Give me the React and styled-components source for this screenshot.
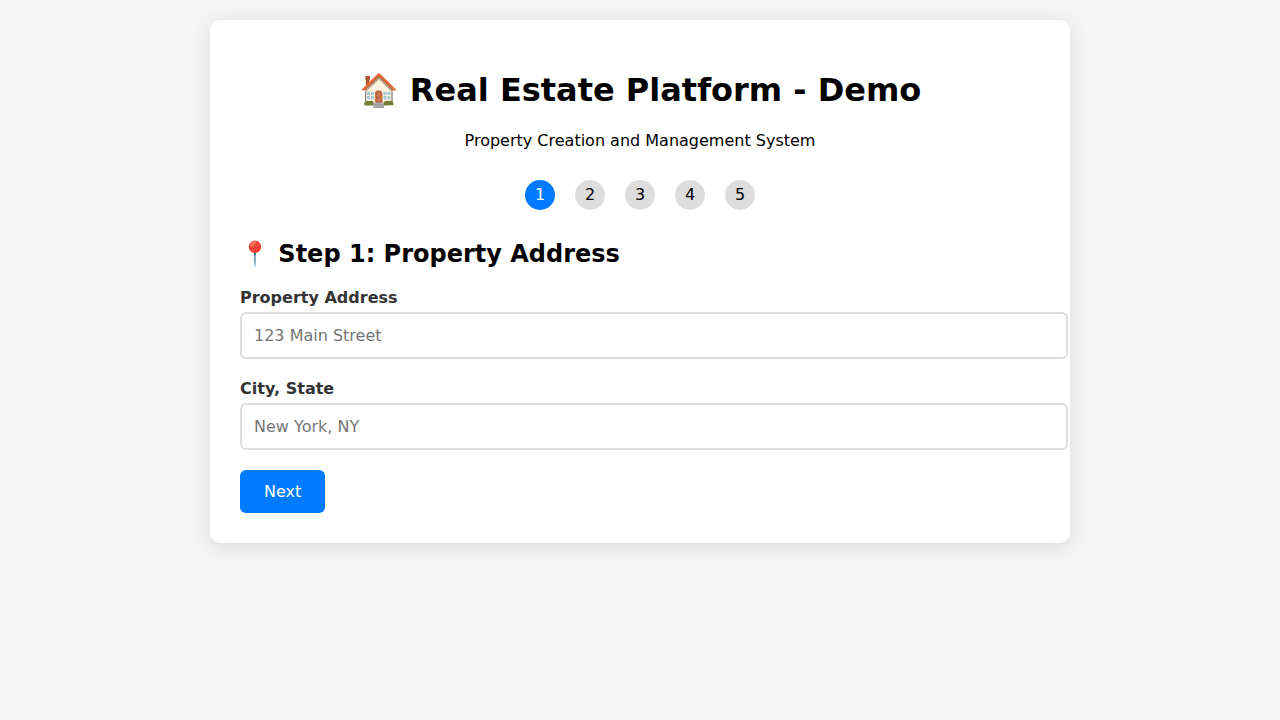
import React from "react";
import styled, { createGlobalStyle } from "styled-components";

const GlobalStyle = createGlobalStyle`
  body {
    margin: 0;
    padding: 20px;
    background: #f5f5f5;
    font-family: "DejaVu Sans", sans-serif;
  }
`;

const Card = styled.main`
  max-width: 800px;
  margin: 0 auto;
  padding: 30px;
  background: white;
  border-radius: 10px;
  box-shadow: 0 4px 20px rgba(0, 0, 0, 0.1);
`;

const Header = styled.header`
  text-align: center;
  margin-bottom: 30px;
`;

const Title = styled.h1`
  font-size: 32px;
  margin: 21.44px 0;
`;

const Subtitle = styled.p`
  font-size: 16px;
  margin: 16px 0;
`;

const Steps = styled.div`
  display: flex;
  justify-content: center;
  margin-bottom: 30px;
`;

const StepDot = styled.div`
  width: 30px;
  height: 30px;
  margin: 0 10px;
  border-radius: 50%;
  display: flex;
  align-items: center;
  justify-content: center;
  background: ${(p) => (p.$active ? "#007bff" : "#ddd")};
  color: ${(p) => (p.$active ? "white" : "black")};
`;

const StepTitle = styled.h2`
  font-size: 24px;
  margin: 19.92px 0;
`;

const Field = styled.div`
  margin-bottom: 20px;
`;

const Label = styled.label`
  display: block;
  margin-bottom: 5px;
  font-weight: bold;
  color: #333;
`;

const Input = styled.input`
  width: 100%;
  padding: 12px;
  border: 2px solid #ddd;
  border-radius: 6px;
  box-sizing: content-box;
  font: 16px "DejaVu Sans", sans-serif;
`;

const Button = styled.button`
  padding: 12px 24px;
  border: none;
  border-radius: 6px;
  background: #007bff;
  color: white;
  font: 16px "DejaVu Sans", sans-serif;
  cursor: pointer;
`;

export default function App() {
  return (
    <>
      <GlobalStyle />
      <Card>
        <Header>
          <Title>🏠 Real Estate Platform - Demo</Title>
          <Subtitle>Property Creation and Management System</Subtitle>
        </Header>
        <Steps>
          {[1, 2, 3, 4, 5].map((n) => (
            <StepDot key={n} $active={n === 1}>{n}</StepDot>
          ))}
        </Steps>
        <StepTitle>📍 Step 1: Property Address</StepTitle>
        <Field>
          <Label htmlFor="address">Property Address</Label>
          <Input id="address" placeholder="123 Main Street" />
        </Field>
        <Field>
          <Label htmlFor="city">City, State</Label>
          <Input id="city" placeholder="New York, NY" />
        </Field>
        <Button type="button">Next</Button>
      </Card>
    </>
  );
}
